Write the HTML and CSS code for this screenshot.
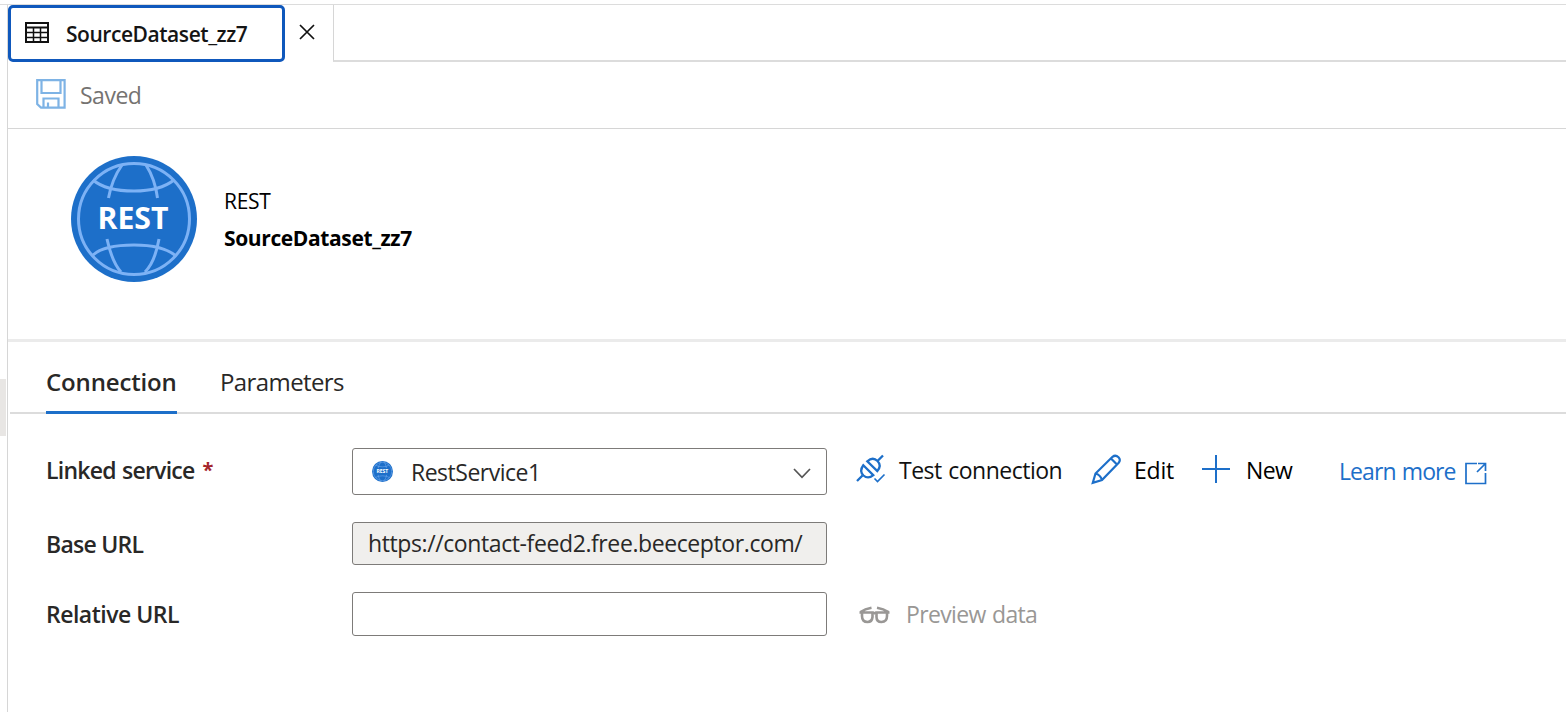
FILE: index.html
```
<!DOCTYPE html>
<html lang="en">
<head>
<meta charset="utf-8">
<title>SourceDataset_zz7</title>
<link rel="stylesheet" href="styles.css">
</head>
<body>
<div class="app">
  <aside class="gutter"><div class="handle"></div></aside>
  <main class="main">
    <header class="tabs">
      <div class="file-tab">
        <svg class="table-icon" width="24" height="21" viewBox="0 0 24 21" fill="none" stroke="#111"><path d="M1 1H23V20H1Z" stroke-width="2"/><path d="M1 5.500H23" stroke-width="2"/><path d="M1 10.500H23M1 15.500H23M8.500 5V20M15.500 5V20" stroke-width="1.500"/></svg>
        <span class="file-name">SourceDataset_zz7</span>
      </div>
      <div class="close"><svg width="16" height="16" viewBox="0 0 16 16" fill="none" stroke="#111" stroke-width="1.700"><path d="M1 1L15 15M15 1L1 15"/></svg></div>
      <div class="tabs-rest"></div>
    </header>
    <div class="toolbar">
      <svg width="30" height="30" viewBox="0 0 30 30" fill="none" stroke="#7eb3e5" stroke-width="2.200"><path d="M1.200 1.200H28.600V28.600H5L1.200 25ZM5.500 1V14H24.500V1M7.500 28V19.500H22.500V28M12 28V23.500"/></svg>
      <span class="saved">Saved</span>
    </div>
    <section class="summary">
      <svg class="rest-logo" width="126" height="126" viewBox="0 0 126 126">
        <circle cx="63" cy="63" r="63" fill="#1d6fc9"/>
        <g fill="none" stroke="#7db2f5" stroke-width="3">
          <circle cx="63" cy="63" r="55.500"/>
          <path d="M22 24Q35 35 63 35Q89 35 103 24M22 99Q33 89 63 89Q92 89 105 100M51 9Q41 23 37.500 42M75 9Q84 23 86.500 42M36 83Q41 106 50 116M88 83Q84 106 74 116"/>
        </g>
        <text x="62" y="72.500" text-anchor="middle" textLength="71" lengthAdjust="spacingAndGlyphs" class="rest-text">REST</text>
      </svg>
      <div class="summary-text"><div class="kind">REST</div><div class="name">SourceDataset_zz7</div></div>
    </section>
    <nav class="pivot">
      <div class="pivot-item active"><span class="connection">Connection</span></div>
      <div class="pivot-item"><span class="parameters">Parameters</span></div>
    </nav>
    <form class="form">
      <div class="row row-service">
        <label class="label l-linked">Linked service<span class="req">*</span></label>
        <div class="select">
          <svg width="21" height="21" viewBox="0 0 126 126">
            <circle cx="63" cy="63" r="63" fill="#1d6fc9"/>
            <g fill="none" stroke="#7db2f5" stroke-width="3">
              <circle cx="63" cy="63" r="55.500"/>
              <path d="M22 24Q35 35 63 35Q89 35 103 24M22 99Q33 89 63 89Q92 89 105 100M51 9Q41 23 37.500 42M75 9Q84 23 86.500 42M36 83Q41 106 50 116M88 83Q84 106 74 116"/>
            </g>
            <text x="62" y="72.500" text-anchor="middle" textLength="71" lengthAdjust="spacingAndGlyphs" class="rest-text">REST</text>
          </svg>
          <span class="select-value">RestService1</span>
          <svg class="chevron" width="18" height="11" viewBox="0 0 18 11" fill="none" stroke="#555" stroke-width="1.700"><path d="M1 1L9 9.300L17 1"/></svg>
        </div>
        <div class="actions">
          <svg class="i-plug" width="30" height="30" viewBox="0 0 30 30" fill="none" stroke="#1d6fc9" stroke-width="2.300"><path d="M1 27L6.500 21.500M21.500 7L27 1.500"/><path d="M7.300 11.200L17.300 21.200Q12 25.500 7.500 21.500Q3 17 7.300 11.200ZM11.300 7.300Q16.800 2.500 21.500 7Q26 11.500 21.300 17Z"/><path d="M18.500 24.500L21.500 27.500L28.500 20.500" stroke-width="1.600"/></svg>
          <span class="t-test">Test connection</span>
          <svg class="i-edit" width="31" height="31" viewBox="0 0 31 31" fill="none" stroke="#1d6fc9" stroke-width="2.200"><path d="M1.800 28.800L4.500 19.500L21.500 2.800Q24.500 .500 27.500 3.200Q30 6 27.700 8.800L11 26ZM4.500 19.500Q9.500 21 11 26M20 4.500L26 10.500"/></svg>
          <span class="t-edit">Edit</span>
          <svg class="i-new" width="28" height="28" viewBox="0 0 28 28" fill="none" stroke="#1d6fc9" stroke-width="2"><path d="M14 0V28M0 14H28"/></svg>
          <span class="t-new">New</span>
          <a class="learn">Learn more</a>
          <svg class="i-open" width="22" height="23" viewBox="0 0 22 23" fill="none" stroke="#1d6fc9" stroke-width="1.700"><path d="M12 1.500H1V21.500H20.500V11M13 1.500H20.500V9M20.500 1.500L12 10"/></svg>
        </div>
      </div>
      <div class="row row-base">
        <label class="label l-base">Base URL</label>
        <div class="input readonly">https://contact-feed2.free.beeceptor.com/</div>
      </div>
      <div class="row row-relative">
        <label class="label l-rel">Relative URL</label>
        <div class="input"></div>
        <div class="preview">
          <svg width="31" height="18" viewBox="0 0 31 18" fill="none" stroke="#999795" stroke-width="2.600"><path d="M.500 6.500H4M27 6.500H30.500M13 7.500Q15.500 6.800 18 7.500M3 6.500H13.500V11Q13 16 8.500 16Q3 16 3 10ZM17.500 6.500H28V10Q28 16 22.500 16Q17.500 16 17.500 11ZM1.500 6Q6 3 12.500 1.800M18 1.800Q24.500 3 29.500 6"/></svg>
          <span class="t-preview">Preview data</span>
        </div>
      </div>
    </form>
  </main>
</div>
</body>
</html>
```
FILE: styles.css
```
* { box-sizing: border-box; }
body { margin: 0; background: #fff; color: #292827; font: 23px "Open Sans", "Noto Sans", sans-serif; overflow: hidden; }
svg { display: block; flex: none; }
.rest-text { font: 700 30px "Open Sans", sans-serif; fill: #fff; }
.app { display: flex; height: 712px; padding-top: 4px; }
.gutter { width: 7px; border-top: 1px solid #dcdcdc; padding-top: 374px; }
.handle { width: 6px; height: 57px; background: #e8e6e4; }
.main { flex: 1; border-left: 1px solid #d6d6d6; border-top: 1px solid #dcdcdc; white-space: nowrap; }
.tabs { display: flex; height: 57px; }
.file-tab { width: 277px; height: 57px; border: 3px solid #0f58bc; border-radius: 5px; display: flex; align-items: center; padding-left: 14px; }
.table-icon { margin-top: -3px; }
.file-name { margin-left: 17px; font-size: 21px; font-weight: 600; color: #151515; letter-spacing: -.45px; }
.close { width: 48px; padding: 19px 0 0 14px; }
.tabs-rest { flex: 1; border-left: 1px solid #d6d6d6; border-bottom: 2px solid #dcdcdc; }
.toolbar { height: 67px; border-bottom: 1px solid #d6d6d6; padding: 17px 0 0 29px; display: flex; line-height: 33px; }
.toolbar svg { margin-left: -1px; }
.saved { margin-left: 14px; color: #757371; letter-spacing: -.5px; }
.summary { height: 213px; border-bottom: 3px solid #ebebeb; padding: 27px 0 0 63px; display: flex; }
.summary-text { margin: 26px 0 0 27px; font-size: 21px; line-height: 38px; color: #000; }
.kind { letter-spacing: -.3px; }
.name { font-weight: 700; letter-spacing: -.38px; line-height: 36px; }
.pivot { display: flex; gap: 43px; height: 72px; margin-left: 2px; padding-left: 36px; border-bottom: 2px solid #dcdcdc; font-size: 24px; line-height: 80px; }
.pivot-item { height: 72px; }
.active { width: 131px; border-bottom: 3px solid #1d6fc9; font-weight: 600; }
.connection { letter-spacing: -.15px; }
.parameters { letter-spacing: -.6px; }
.form { padding: 34px 0 0 38px; display: grid; gap: 27px; }
.row { display: flex; }
.row-service { height: 47px; }
.row-base { height: 43px; }
.row-relative { height: 44px; }
.label { width: 306px; font-weight: 600; line-height: 45px; letter-spacing: -.5px; }
.l-linked { letter-spacing: -.75px; word-spacing: 1px; }
.l-base { letter-spacing: -.75px; }
.req { color: #a4262c; font-size: 20px; font-weight: 700; margin-left: 8px; line-height: 1; vertical-align: 2px; }
.select, .input { width: 475px; border: 1px solid #7d7b79; border-radius: 3px; }
.select { display: flex; align-items: center; padding: 0 15px 0 19px; }
.select-value { margin-left: 18px; letter-spacing: -.5px; padding-top: 1px; }
.chevron { margin: 3px 0 0 auto; }
.readonly { background: #f0efed; padding-left: 15px; line-height: 41px; letter-spacing: -.4px; }
.actions { display: flex; line-height: 45px; color: #111; }
.i-plug { margin: 6px 0 0 29px; }
.t-test { margin-left: 13px; width: 164px; letter-spacing: -.5px; word-spacing: 1px; }
.i-edit { margin: 6px 0 0 28px; }
.t-edit { margin-left: 12px; width: 40px; letter-spacing: -.2px; color: #000; }
.i-new { margin: 7px 0 0 28px; }
.t-new { margin-left: 16px; width: 47px; letter-spacing: -.6px; color: #000; }
.learn { margin-left: 46px; width: 118px; color: #1d6fc9; letter-spacing: -.9px; word-spacing: 1px; line-height: 47px; }
.i-open { margin: 14px 0 0 8px; }
.preview { display: flex; margin-left: 32px; color: #999795; line-height: 45px; letter-spacing: -.65px; word-spacing: 1px; }
.preview svg { margin-top: 14px; }
.t-preview { margin-left: 16px; }
```
